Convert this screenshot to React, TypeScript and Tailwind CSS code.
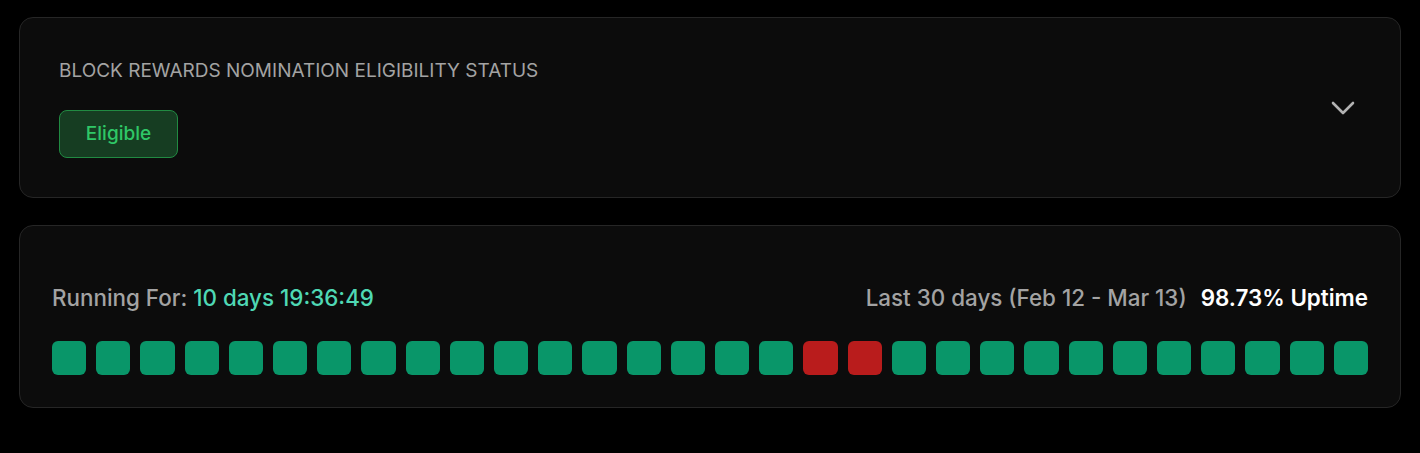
const days = Array.from({ length: 30 }, (_, i) => (i === 17 || i === 18 ? 'down' : 'up'));

function Chevron() {
  return (
    <svg width="24" height="14" viewBox="0 0 24 14" fill="none" className="text-[#b3b3b3]">
      <path d="M2 2l10 10L22 2" stroke="currentColor" strokeWidth="2.6" strokeLinecap="round" strokeLinejoin="round" />
    </svg>
  );
}

export default function App() {
  return (
    <div className="min-h-[453px] bg-black px-[19px] pt-[17px] font-['Inter',sans-serif]">
      {/* eligibility */}
      <div className="flex items-center justify-between rounded-[14px] border border-[#262626] bg-[#0c0c0c] pt-[39px] pb-[39px] pl-[39px] pr-[45px]">
        <div>
          <h3 className="text-[19px] leading-[27px] uppercase text-[#a3a3a3]">
            Block Rewards Nomination Eligibility Status
          </h3>
          <div className="mt-[26px] inline-flex h-[48px] w-[119px] items-center justify-center rounded-lg border border-[#218a42] bg-[#163d22] text-[19px] font-medium text-[#2fc767]">
            Eligible
          </div>
        </div>
        <Chevron />
      </div>

      {/* uptime */}
      <div className="mt-[27px] rounded-[14px] border border-[#262626] bg-[#0c0c0c] px-[32px] pt-[58px] pb-[32px]">
        <div className="flex items-center justify-between text-[22.4px] leading-[28px] font-medium">
          <div>
            <span className="text-[#a3a3a3]">Running For: </span>
            <span className="text-[#4fd8b4]">10 days 19:36:49</span>
          </div>
          <div className="flex gap-[14px]">
            <span className="text-[#a3a3a3]">Last 30 days (Feb 12 - Mar 13)</span>
            <span className="font-semibold text-white">98.73% Uptime</span>
          </div>
        </div>
        <div className="mt-[29px] flex justify-between gap-[10px]">
          {days.map((d, i) => (
            <div
              key={i}
              className={d === 'up' ? 'h-[34px] flex-1 rounded-[6px] bg-[#099669]' : 'h-[34px] flex-1 rounded-[6px] bg-[#b91c1c]'}
            />
          ))}
        </div>
      </div>
    </div>
  );
}
